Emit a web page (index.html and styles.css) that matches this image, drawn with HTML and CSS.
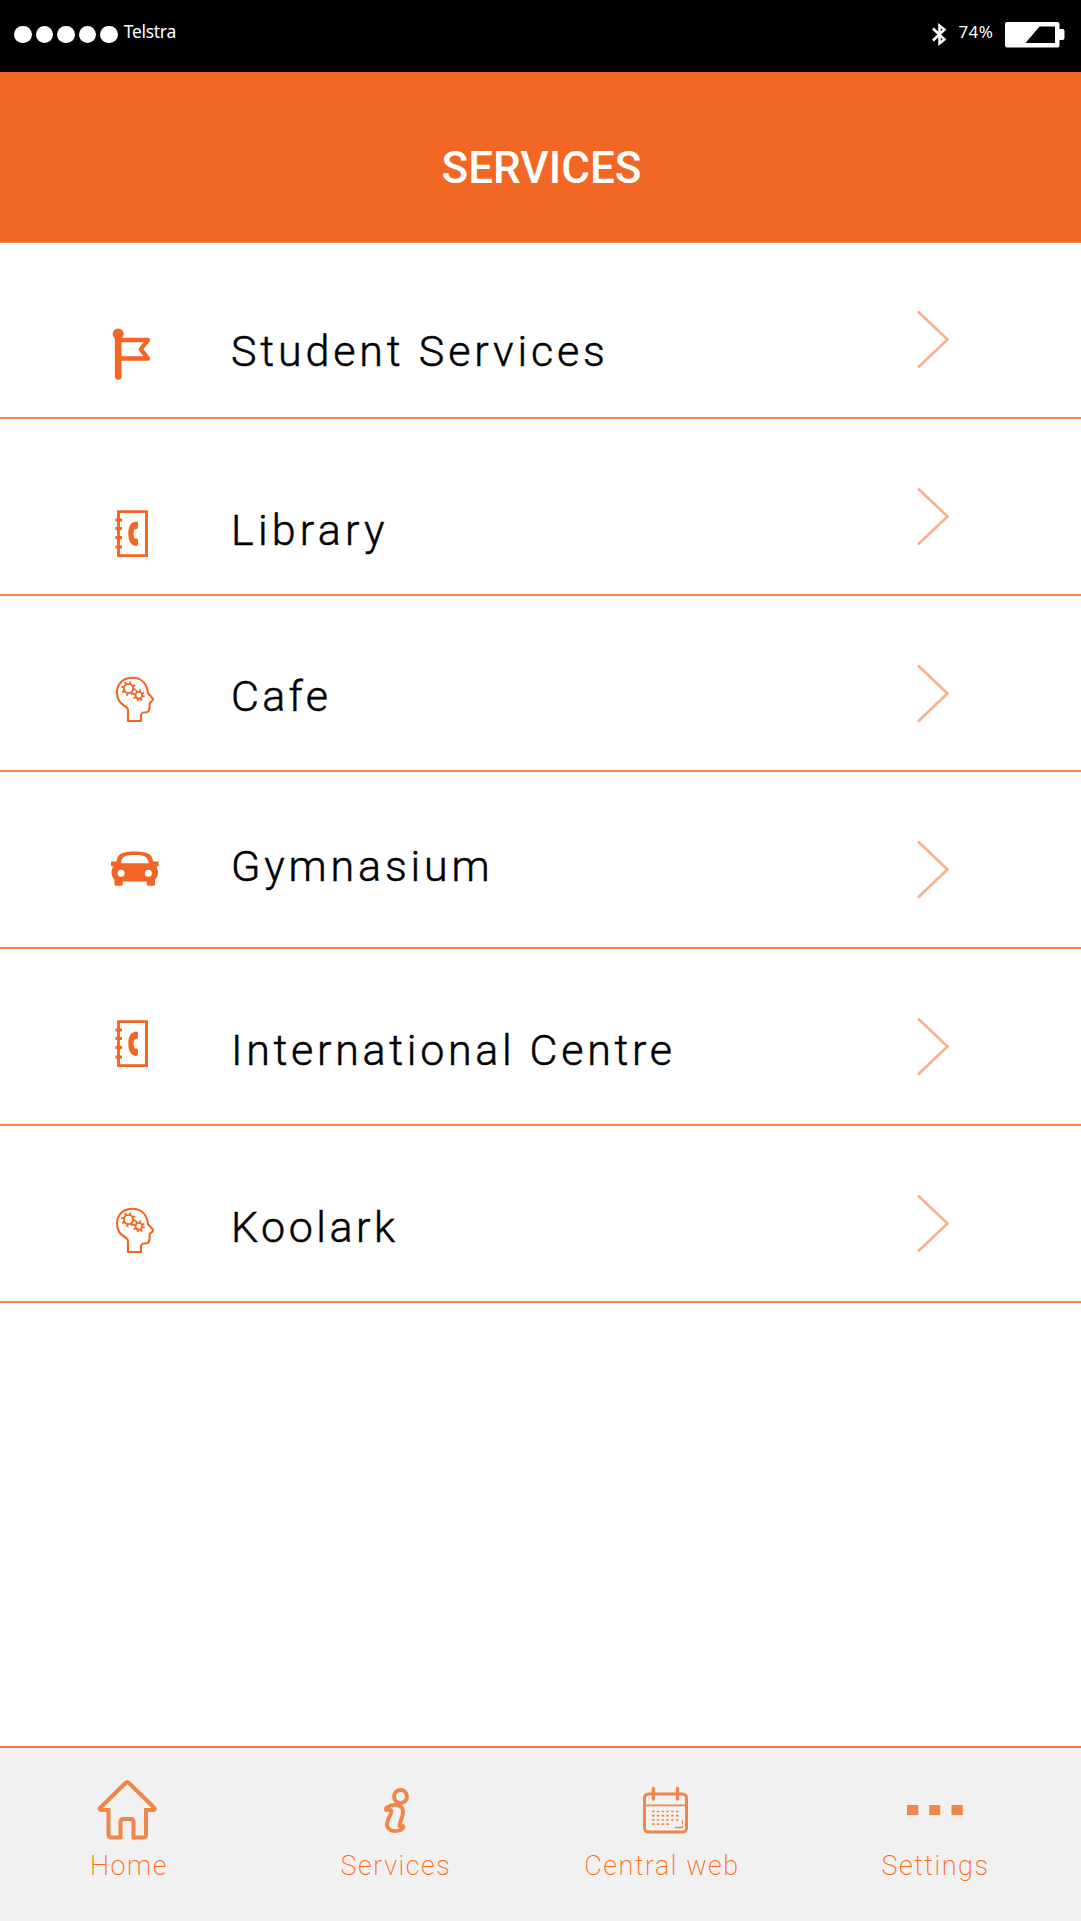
FILE: index.html
```html
<!DOCTYPE html>
<html lang="en">
<head>
<meta charset="utf-8">
<title>Services</title>
<link rel="stylesheet" href="styles.css">
</head>
<body>
<svg width="0" height="0" class="defs">
  <symbol id="chevron" viewBox="0 0 36 60"><path d="M2 2.500 31.500 30.500 2 58.500" fill="none" stroke="#f9b08c" stroke-width="2.600"/></symbol>
  <symbol id="flag" viewBox="108 327 54 54">
    <g fill="none" stroke="#f26522" stroke-linejoin="round" stroke-linecap="round"><path d="M118.200 336v40.500" stroke-width="6.600"/><path d="M119 340h29l-7.200 9.300l7.200 9.200h-29" stroke-width="4.300"/></g><circle cx="118.200" cy="334" r="5.500" fill="#f26522"/>
  </symbol>
  <symbol id="book" viewBox="108 507 54 54">
    <path d="M118.500 511.600H146.500V555.600H118.500Z M115.500 520h6.500M115.500 528.500h6.500M115.500 537.500h6.500M115.500 547h6.500" fill="none" stroke="#f26522" stroke-width="2.900"/>
    <path d="M136 521.500C130.500 522 128.300 527 128.300 533.500S130.500 545.300 136 546Q138 546 138 543.500V540Q138 538.500 136.500 538.500H134.500C133.300 536 133.300 531.500 134.500 529.200H136Q138 529 138 527V523Q138 521.500 136 521.500Z" fill="#f26522"/>
  </symbol>
  <symbol id="head" viewBox="108 673 54 54">
    <g fill="none" stroke="#f26522" stroke-linejoin="round">
    <path d="M128 721v-10.500c0-2.500-1-3.300-4-5-4.500-2.600-7-7.300-7-13.200 0-9 6.600-14.500 15.500-14.500 9.600 0 14.500 6.500 15.500 15.500l4.800 5.200c.6.800.4 1.300-.3 1.900l-2.800 2.600c.2 7.500-1 9.200-3 9.200-2.500 0-5.700-.2-5.700 3.300V721z" stroke-width="2.100"/>
    <circle cx="128.500" cy="688.500" r="4.600" stroke-width="1.900"/><circle cx="128.500" cy="688.500" r="6.200" stroke-width="2.300" stroke-dasharray="2 2.870"/>
    <circle cx="138.800" cy="695.300" r="3.400" stroke-width="1.900"/><circle cx="138.800" cy="695.300" r="5" stroke-width="2" stroke-dasharray="1.800 2.127"/>
    </g>
  </symbol>
  <symbol id="car" viewBox="108 841 54 54">
    <path fill="#f26522" fill-rule="evenodd" d="M111 861.500h5.500c1-6.500 3.500-10 18.300-10s17.300 3.500 18.300 10h5.500v4.300l-2 1 1.300 3.700c.7 3.500-.2 6-2.900 9.500v4q0 1.700-1.700 1.700h-5q-1.600 0-1.600-1.700v-2.500h-24v2.500q0 1.700-1.600 1.700h-5q-1.700 0-1.700-1.700v-4c-2.500-3.500-3.400-6-2.700-9.500l1.300-3.700-2-1zM121 863.300h27.800c-1.500-6-2.500-8.200-14-8.200s-12.800 2.200-13.800 8.200zM117.600 873.200a3.500 3.500 0 1 0 7 0a3.500 3.500 0 1 0-7 0M144.900 873.200a3.500 3.500 0 1 0 7 0a3.500 3.500 0 1 0-7 0"/>
  </symbol>
</svg>

<header class="status">
  <div class="signal"><i></i><i></i><i></i><i></i><i></i></div>
  <span class="carrier">Telstra</span>
  <svg class="bluetooth" viewBox="930 20 18 28" width="18" height="28"><path d="M933 28.500 944.500 39.500 939.500 43.500V25.500l5 4L933 40.500" fill="none" stroke="#fff" stroke-width="2.500"/></svg>
  <span class="percent">74%</span>
  <svg class="battery" viewBox="1004 21 61 28" width="61" height="28"><path fill="#fff" fill-rule="evenodd" d="M1006 22h50.500q2 0 2 2v5h3q2 0 2 2v7q0 2-2 2h-3v5.500q0 2-2 2H1006q-2 0-2-2V24q0-2 2-2zM1024.500 43H1054V26.500h-15.500z"/></svg>
</header>
<h1 class="title">SERVICES</h1>

<ul class="list">
  <li class="row student"><svg class="icon"><use href="#flag"/></svg><span class="label">Student Services</span><svg class="go"><use href="#chevron"/></svg></li>
  <li class="row library"><svg class="icon"><use href="#book"/></svg><span class="label">Library</span><svg class="go"><use href="#chevron"/></svg></li>
  <li class="row cafe"><svg class="icon"><use href="#head"/></svg><span class="label">Cafe</span><svg class="go"><use href="#chevron"/></svg></li>
  <li class="row gym"><svg class="icon"><use href="#car"/></svg><span class="label">Gymnasium</span><svg class="go"><use href="#chevron"/></svg></li>
  <li class="row centre"><svg class="icon"><use href="#book"/></svg><span class="label">International Centre</span><svg class="go"><use href="#chevron"/></svg></li>
  <li class="row koolark"><svg class="icon"><use href="#head"/></svg><span class="label">Koolark</span><svg class="go"><use href="#chevron"/></svg></li>
</ul>

<nav class="tabs">
  <a class="tab"><svg viewBox="97 1777 64 66" width="64" height="66"><path d="M121 1837.500H111.500q-3 0-3-3V1810H101q-2.500-.5-.5-2.500L125.500 1783q1.700-1.500 3.400 0L154 1807.500q2 2-.5 2.500H146v24.500q0 3-3 3h-9.500V1822q0-3-3-3h-7q-3 0-3 3v17" fill="none" stroke="#ef864a" stroke-width="4"/></svg><span>Home</span></a>
  <a class="tab"><svg viewBox="364 1776.500 64 66" width="64" height="66"><g fill="none" stroke="#ef864a" stroke-width="3.900" stroke-linejoin="round"><circle cx="400.500" cy="1796" r="6.500"/><path d="M387 1809.500c-1.500 0-1.500-1 0-2.500 5-3.800 16-4 16 4 0 5.500-3 9.500-3.500 14.500 1.500 0 4-1 4 1-1.500 3.500-6 4-9 4-4.500 0-8-3-7.500-7.500.6-4.500 3.500-7 4.500-12.500-1-2-3-1-4.500-1z"/></g></svg><span>Services</span></a>
  <a class="tab"><svg viewBox="630 1777 64 66" width="64" height="66"><g fill="none" stroke="#ef864a"><rect x="644.500" y="1794" width="42" height="38" rx="4" stroke-width="3"/><path d="M653.300 1788.500v10.500M677.500 1788.500v10.500" stroke-width="3.300" stroke-linecap="round"/><path d="M645 1805.300h41" stroke-width="1.800"/><path d="M652 1811.500h27M652 1815.700h27M652 1820h27M652 1824.200h17" stroke-width="1.700" stroke-dasharray="2.500 2.300"/><path d="M675 1827.500h7.500v-7" stroke-width="1.300" stroke-dasharray="9.300 1.500"/></g></svg><span>Central web</span></a>
  <a class="tab"><svg viewBox="903 1777 64 66" width="64" height="66"><path fill="#ef864a" d="M907 1805h11.300v10H907zM929.200 1805h11v10h-11zM951.500 1805h11.300v10h-11.300z"/></svg><span>Settings</span></a>
</nav>
</body>
</html>
```
FILE: styles.css
```css
* { box-sizing: border-box; }
body { margin: 0; height: 1921px; display: flex; flex-direction: column; background: #fff; font-family: Roboto, Inter, sans-serif; }
.defs { display: none; }
.status { height: 72px; background: #000; color: #fff; display: flex; align-items: flex-start; flex: none; font-family: "Noto Sans", sans-serif; padding-left: 14.2px; }
.signal { display: flex; gap: 3.9px; padding-top: 25.800px; }
.signal i { width: 17.600px; height: 17.600px; border-radius: 50%; background: #fff; }
.carrier { margin: 19px 0 0 6px; font-size: 17.500px; letter-spacing: -.3px; line-height: 25px; width: 60px; }
.bluetooth { margin: 20px 0 0 auto; }
.percent { margin: 19px 0 0 11px; width: 46px; font-size: 17px; letter-spacing: .4px; line-height: 25px; }
.battery { margin: 21px 15.500px 0 0; }
.title { height: 171px; flex: none; margin: 0; padding: 71px 0 0 2px; background: #f26724; color: #fff; text-align: center; font-size: 44px; line-height: 50px; font-weight: 500; border-bottom: 1px solid #f58a58; }
.list { list-style: none; margin: -1px 0 0; padding: 0; flex: 1; }
.row { height: 177px; display: flex; align-items: flex-start; padding-left: 108px; border-bottom: 2px solid #f5854d; }
.cafe { height: 176px; }
.icon { width: 54px; height: 54px; flex: none; }
.label { width: 684.5px; flex: none; margin-left: 69px; font-size: 43px; line-height: 50px; font-weight: 300; -webkit-text-stroke: .5px #000; letter-spacing: 3.850px; color: #000; white-space: nowrap; }
.go { width: 36px; height: 60px; margin-top: 66.500px; flex: none; }
.student .icon { margin-top: 85px; }
.student .label { margin-top: 84px; }
.library .icon { margin-top: 88px; }
.library .label { margin-top: 86px; letter-spacing: 4.200px; }
.cafe .icon { margin-top: 77px; }
.cafe .label { margin-top: 75px; letter-spacing: 3.300px; }
.gym .icon { margin-top: 69px; }
.gym .label { margin-top: 69px; }
.centre .icon { margin-top: 68px; }
.centre .label { margin-top: 76px; letter-spacing: 3.700px; }
.koolark .icon { margin-top: 78px; }
.koolark .label { margin-top: 76px; letter-spacing: 3.500px; }
.tabs { height: 175px; flex: none; display: grid; grid-template-columns: 257px 277px 255px 292px; background: #f1f1f1; border-top: 2px solid #f37b3d; }
.tab { display: flex; flex-direction: column; align-items: center; padding-top: 29px; color: #ff6a13; font-size: 27px; line-height: 34px; letter-spacing: 1.500px; font-weight: 200; }
.tab span { margin-top: 6px; padding-left: 1px; white-space: nowrap; }
```
